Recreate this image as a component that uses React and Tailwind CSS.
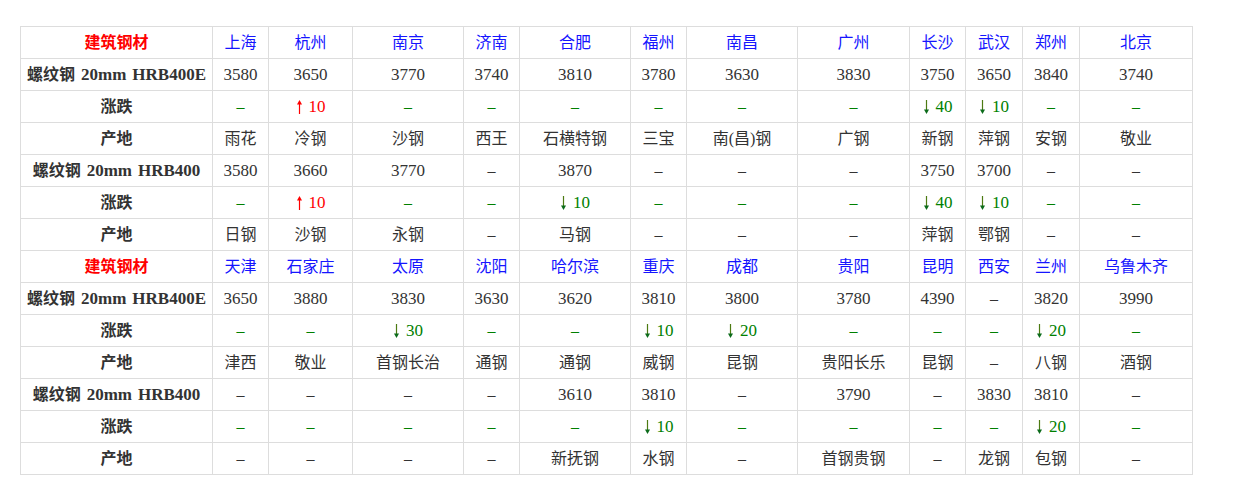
import React from "react";

const D = "–";

const rows = [
  { type: "head", label: "建筑钢材", cells: ["上海", "杭州", "南京", "济南", "合肥", "福州", "南昌", "广州", "长沙", "武汉", "郑州", "北京"] },
  { type: "val", label: "螺纹钢 20mm HRB400E", cells: ["3580", "3650", "3770", "3740", "3810", "3780", "3630", "3830", "3750", "3650", "3840", "3740"] },
  { type: "chg", label: "涨跌", cells: [D, "+10", D, D, D, D, D, D, "-40", "-10", D, D] },
  { type: "val", label: "产地", cells: ["雨花", "冷钢", "沙钢", "西王", "石横特钢", "三宝", "南(昌)钢", "广钢", "新钢", "萍钢", "安钢", "敬业"] },
  { type: "val", label: "螺纹钢 20mm HRB400", cells: ["3580", "3660", "3770", D, "3870", D, D, D, "3750", "3700", D, D] },
  { type: "chg", label: "涨跌", cells: [D, "+10", D, D, "-10", D, D, D, "-40", "-10", D, D] },
  { type: "val", label: "产地", cells: ["日钢", "沙钢", "永钢", D, "马钢", D, D, D, "萍钢", "鄂钢", D, D] },
  { type: "head", label: "建筑钢材", cells: ["天津", "石家庄", "太原", "沈阳", "哈尔滨", "重庆", "成都", "贵阳", "昆明", "西安", "兰州", "乌鲁木齐"] },
  { type: "val", label: "螺纹钢 20mm HRB400E", cells: ["3650", "3880", "3830", "3630", "3620", "3810", "3800", "3780", "4390", D, "3820", "3990"] },
  { type: "chg", label: "涨跌", cells: [D, D, "-30", D, D, "-10", "-20", D, D, D, "-20", D] },
  { type: "val", label: "产地", cells: ["津西", "敬业", "首钢长治", "通钢", "通钢", "威钢", "昆钢", "贵阳长乐", "昆钢", D, "八钢", "酒钢"] },
  { type: "val", label: "螺纹钢 20mm HRB400", cells: [D, D, D, D, "3610", "3810", D, "3790", D, "3830", "3810", D] },
  { type: "chg", label: "涨跌", cells: [D, D, D, D, D, "-10", D, D, D, D, "-20", D] },
  { type: "val", label: "产地", cells: [D, D, D, D, "新抚钢", "水钢", D, "首钢贵钢", D, "龙钢", "包钢", D] },
];

function UpArrow() {
  return (
    <svg width="7" height="14" viewBox="0 0 7 14" className="mr-[6px] shrink-0">
      <line x1="3.5" y1="3" x2="3.5" y2="14" stroke="#ff0000" strokeWidth="1.2" />
      <polygon points="1,4.5 3.5,0 6,4.5" fill="#ff0000" />
    </svg>
  );
}

function DownArrow() {
  return (
    <svg width="7" height="14" viewBox="0 0 7 14" className="mr-[6px] shrink-0">
      <line x1="3.5" y1="0" x2="3.5" y2="11" stroke="#4d7a12" strokeWidth="1.2" />
      <polygon points="1,9.5 3.5,14 6,9.5" fill="#0b6b1a" />
    </svg>
  );
}

const isNum = (v) => /^\d+$/.test(v);

function Cell({ type, value }) {
  if (type === "head") {
    return <span className="text-[#1515ff]">{value}</span>;
  }
  if (type === "chg") {
    if (value.startsWith("+")) {
      return (
        <span className="flex items-center text-[#ff0000] text-[17px]">
          <UpArrow />
          {value.slice(1)}
        </span>
      );
    }
    if (value.startsWith("-")) {
      return (
        <span className="flex items-center text-[#008000] text-[17px]">
          <DownArrow />
          {value.slice(1)}
        </span>
      );
    }
    return <span className="text-[#008000]">{value}</span>;
  }
  return (
    <span className={isNum(value) ? "text-[#333333] text-[17px]" : "text-[#333333]"}>
      {value}
    </span>
  );
}

function Label({ row }) {
  if (row.type === "head") {
    return <span className="font-bold text-[#ff0000]">{row.label}</span>;
  }
  const parts = row.label.split(" ");
  if (parts.length === 1) {
    return <span className="font-bold text-[#333333]">{row.label}</span>;
  }
  return (
    <span className="flex items-center gap-[6px] font-bold text-[#333333]">
      <span>{parts[0]}</span>
      <span className="text-[17px]">{parts[1]}</span>
      <span className="text-[17px]">{parts[2]}</span>
    </span>
  );
}

export default function App() {
  return (
    <div
      className="w-[1246px] h-[484px] bg-white overflow-hidden pt-[26px] pl-[20px]"
      style={{ fontFamily: '"Liberation Serif", "Noto Sans CJK SC", serif' }}
    >
      <div className="inline-grid bg-[#dddddd] p-px gap-px grid-cols-[191px_55px_83px_110px_55px_110px_55px_110px_111px_55px_56px_56px_112px] auto-rows-[31px] text-[16px] leading-none">
        {rows.map((r, ri) => (
          <React.Fragment key={ri}>
            <div className="bg-white flex items-center justify-center whitespace-nowrap">
              <Label row={r} />
            </div>
            {r.cells.map((c, ci) => (
              <div key={ci} className="bg-white flex items-center justify-center whitespace-nowrap">
                <Cell type={r.type} value={c} />
              </div>
            ))}
          </React.Fragment>
        ))}
      </div>
    </div>
  );
}
